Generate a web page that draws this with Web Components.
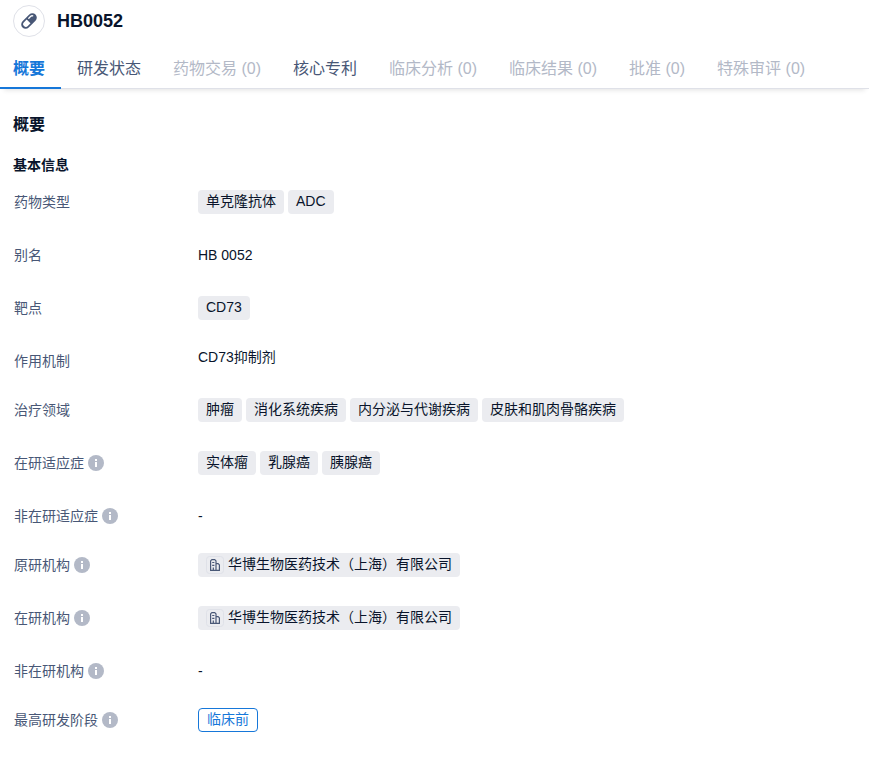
<!DOCTYPE html>
<html lang="zh-CN">
<head>
<meta charset="utf-8">
<meta name="viewport" content="width=device-width, initial-scale=1">
<title>HB0052</title>
<style>
body { margin: 0; background: #fff; color: #09142b; font: 14px/24px "Liberation Sans", "Noto Sans CJK SC", sans-serif; }
</style>
</head>
<body>
<drug-page></drug-page>
<script>
const define = (name, html, setup) => customElements.define(name, class extends HTMLElement {
  connectedCallback() {
    if (this.shadowRoot) return;
    const root = this.attachShadow({ mode: "open" });
    root.innerHTML = html;
    if (setup) setup(this, root);
  }
});

define("pill-icon", `
<style>
:host { display: flex; align-items: center; justify-content: center; box-sizing: border-box; width: 32px; height: 32px; border: 1px solid #dfe1e8; border-radius: 50%; }
svg { display: block; }
</style>
<svg width="18" height="18" viewBox="0 0 18 18" aria-hidden="true">
  <g transform="rotate(-45 9 9)">
    <rect x="-.2" y="4.6" width="18.4" height="8.8" rx="4.4" fill="#485776"/>
    <path d="M8.4 6.3H4.6a2.7 2.7 0 0 0 0 5.4h3.8z" fill="#fff"/>
    <path d="M10.8 6.9h2.8a2 2 0 0 1 1.7 1.1" fill="none" stroke="#fff" stroke-width="1.3" stroke-linecap="round"/>
  </g>
</svg>`);

define("drug-header", `
<style>
:host { display: flex; align-items: center; gap: 12px; padding: 5px 13px 0; }
h1 { margin: 0; font-size: 18px; line-height: 24px; font-weight: 700; color: #09142b; }
</style>
<pill-icon></pill-icon><h1><slot></slot></h1>`);

define("nav-tabs", `
<style>
:host { display: block; margin-top: 13px; border-bottom: 1px solid #dfe1e8; box-shadow: 0 5px 5px -4px rgba(0,0,0,.12); }
nav { display: flex; }
</style>
<nav aria-label="药物信息"><slot></slot></nav>`);

define("nav-tab", `
<style>
:host { display: block; flex: none; }
button { display: block; margin: 0; padding: 7px 16px 6px; border: 0; border-bottom: 2px solid transparent; background: none; font: inherit; font-size: 16px; line-height: 24px; color: #485776; cursor: pointer; margin-bottom: -1px; }
:host(:first-child) button { padding-left: 13px; }
:host([active]) button { color: #1677d9; font-weight: 700; border-bottom-color: #1677d9; }
button:disabled { color: #b3b9c7; cursor: default; }
</style>
<button type="button"><slot></slot></button>`, (el, root) => {
  const button = root.querySelector("button");
  button.disabled = el.hasAttribute("disabled");
  if (el.hasAttribute("active")) button.setAttribute("aria-current", "page");
});

define("info-tip", `
<style>
:host { display: block; }
button { display: block; padding: 0; border: 0; background: none; }
svg { display: block; }
</style>
<button type="button" aria-label="说明"><svg width="16" height="16" viewBox="0 0 16 16" aria-hidden="true">
  <circle cx="8" cy="8" r="8" fill="#b3b9c7"/><path d="M7 4h2v2H7zM7 7h2v5H7z" fill="#fff"/>
</svg></button>`);

define("info-row", `
<style>
:host { display: grid; grid-template-columns: 184px 1fr; align-items: start; padding: 0 14px 29px; }
:host([compact]) { padding-bottom: 25px; }
.label { display: flex; align-items: center; gap: 4px; color: #485776; }
.value { display: flex; flex-wrap: wrap; gap: 4px; min-height: 24px; }
:host([raised]) .value { line-height: 16px; }
</style>
<div class="label"><span></span></div><div class="value"><slot></slot></div>`, (el, root) => {
  root.querySelector("span").textContent = el.getAttribute("label");
  if (el.hasAttribute("tip")) root.querySelector(".label").append(document.createElement("info-tip"));
});

define("value-tag", `
<style>
:host { display: block; box-sizing: border-box; height: 24px; padding: 0 8px; border-radius: 4px; background: #ebecf0; line-height: 22px; }
:host([outlined]) { border: 1px solid #1677d9; background: #fff; color: #1677d9; line-height: 20px; }
</style>
<slot></slot>`);

define("org-tag", `
<style>
:host { display: block; }
value-tag a { display: flex; gap: 4px; color: inherit; text-decoration: none; }
svg { display: block; margin-top: 3px; }
</style>
<value-tag><a href="#"><svg width="18" height="18" viewBox="0 0 18 18" aria-hidden="true">
  <rect x=".5" y=".5" width="17" height="17" rx="3" fill="#ebecf0" stroke="#dfe1e8"/>
  <path d="M4.6 14.4V4.8l1.2-1.2h3L10 4.8v9.6zM10 7.6h2.2l1.2 1.2v5.6H10M6.2 6.5h2.2M6.2 9.3h2.2M7.3 11.6v2.6" fill="none" stroke="#485776" stroke-width="1.2" stroke-linejoin="round"/>
</svg><span><slot></slot></span></a></value-tag>`);

define("info-section", `
<style>
:host { display: block; }
h2, h3 { margin: 0; padding: 0 13px; color: #09142b; font-weight: 700; }
h2 { margin-top: 24px; font-size: 16px; line-height: 24px; }
h3 { margin: 16px 0 13px; font-size: 14px; line-height: 24px; }
</style>
<h2>概要</h2><h3>基本信息</h3><slot></slot>`);

define("drug-page", `
<style>:host { display: block; }</style>
<drug-header>HB0052</drug-header>
<nav-tabs>
  <nav-tab active>概要</nav-tab><nav-tab>研发状态</nav-tab><nav-tab disabled>药物交易 (0)</nav-tab><nav-tab>核心专利</nav-tab><nav-tab disabled>临床分析 (0)</nav-tab><nav-tab disabled>临床结果 (0)</nav-tab><nav-tab disabled>批准 (0)</nav-tab><nav-tab disabled>特殊审评 (0)</nav-tab>
</nav-tabs>
<main><info-section>
  <info-row label="药物类型"><value-tag>单克隆抗体</value-tag><value-tag>ADC</value-tag></info-row>
  <info-row label="别名">HB 0052</info-row>
  <info-row label="靶点"><value-tag>CD73</value-tag></info-row>
  <info-row label="作用机制" compact raised>CD73抑制剂</info-row>
  <info-row label="治疗领域"><value-tag>肿瘤</value-tag><value-tag>消化系统疾病</value-tag><value-tag>内分泌与代谢疾病</value-tag><value-tag>皮肤和肌肉骨骼疾病</value-tag></info-row>
  <info-row label="在研适应症" tip><value-tag>实体瘤</value-tag><value-tag>乳腺癌</value-tag><value-tag>胰腺癌</value-tag></info-row>
  <info-row label="非在研适应症" tip compact>-</info-row>
  <info-row label="原研机构" tip><org-tag>华博生物医药技术（上海）有限公司</org-tag></info-row>
  <info-row label="在研机构" tip><org-tag>华博生物医药技术（上海）有限公司</org-tag></info-row>
  <info-row label="非在研机构" tip compact>-</info-row>
  <info-row label="最高研发阶段" tip compact><value-tag outlined>临床前</value-tag></info-row>
</info-section></main>`);
</script>
</body>
</html>
